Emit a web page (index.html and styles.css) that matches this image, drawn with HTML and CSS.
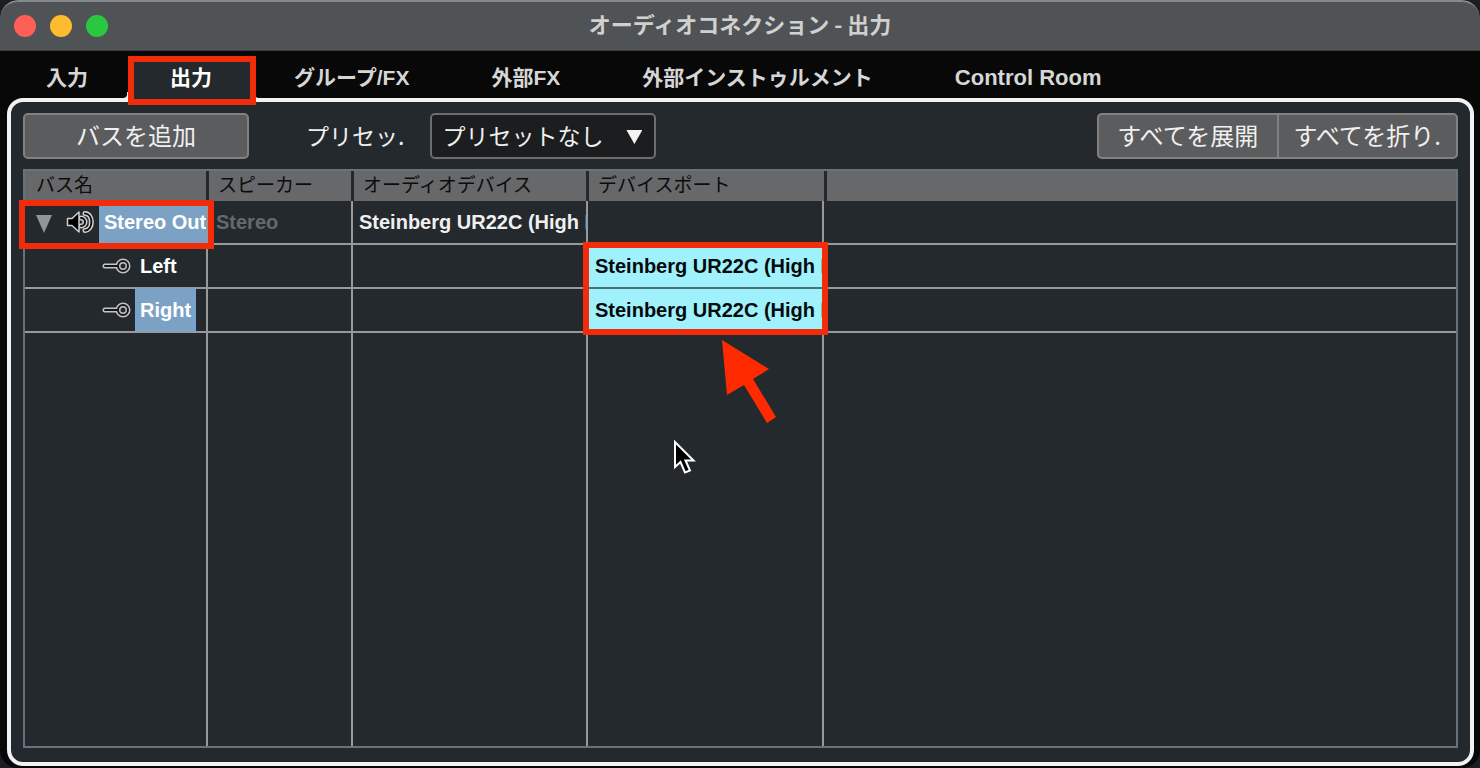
FILE: index.html
```html
<!DOCTYPE html>
<html lang="ja">
<head>
    <meta charset="UTF-8">
    <meta name="viewport" content="width=device-width, initial-scale=1.0">
    <title>オーディオコネクション - 出力</title>
    <link rel="stylesheet" href="styles.css">
</head>
<body>
    <div class="window">
        <header class="titlebar">
            <div class="lights">
                <span class="light red"></span>
                <span class="light yellow"></span>
                <span class="light green"></span>
            </div>
            <h1>オーディオコネクション - 出力</h1>
        </header>

        <nav class="tabs">
            <button type="button" class="tab">入力</button>
            <button type="button" class="tab active">出力<span class="mark mark-tab"></span></button>
            <button type="button" class="tab">グループ/FX</button>
            <button type="button" class="tab">外部FX</button>
            <button type="button" class="tab">外部インストゥルメント</button>
            <button type="button" class="tab latin">Control Room</button>
        </nav>

        <main class="panel">
            <div class="toolbar">
                <button type="button" class="btn add-bus">バスを追加</button>
                <label for="preset">プリセッ.</label>
                <div class="select-box">
                    <select id="preset">
                        <option>プリセットなし</option>
                    </select>
                    <span class="select-arrow"></span>
                </div>
                <div class="btn-group">
                    <button type="button" class="btn">すべてを展開</button>
                    <button type="button" class="btn">すべてを折り.</button>
                </div>
            </div>

            <div class="table-box">
                <table>
                    <colgroup>
                        <col class="col-name">
                        <col class="col-speaker">
                        <col class="col-device">
                        <col class="col-port">
                        <col>
                    </colgroup>
                    <thead>
                        <tr>
                            <th>バス名</th>
                            <th>スピーカー</th>
                            <th>オーディオデバイス</th>
                            <th>デバイスポート</th>
                            <th></th>
                        </tr>
                    </thead>
                    <tbody>
                        <tr>
                            <td>
                                <div class="bus">
                                    <span class="toggle"></span>
                                    <svg class="speaker" width="30" height="24" viewBox="0 0 30 24">
                                        <path d="M15 8A4 4 0 0 1 15 16M19 3.500C27.500 4 27.500 20 19 20.500" fill="none" stroke="#d0d0d0" stroke-width="5" stroke-linecap="round"/>
                                        <path d="M15 8A4 4 0 0 1 15 16M19 3.500C27.500 4 27.500 20 19 20.500" fill="none" stroke="#111" stroke-width="2" stroke-linecap="round"/>
                                        <path d="M1.500 8.500H6L13 2V22L6 15.500H1.500Z" fill="#000" stroke="#d0d0d0" stroke-width="1.500" stroke-linejoin="round"/>
                                    </svg>
                                    <span class="name selected">Stereo Out</span>
                                </div>
                                <span class="mark mark-bus"></span>
                            </td>
                            <td class="dim">Stereo</td>
                            <td><div class="clip">Steinberg UR22C (High P</div></td>
                            <td></td>
                            <td></td>
                        </tr>
                        <tr>
                            <td>
                                <div class="bus channel">
                                    <svg width="30" height="18" viewBox="0 0 30 18">
                                        <path d="M3 9H16" stroke="#c4c4c4" stroke-width="5" stroke-linecap="round"/>
                                        <circle cx="21" cy="9" r="5" fill="#24292d" stroke="#c4c4c4" stroke-width="5"/>
                                        <path d="M3 9H16" stroke="#15181a" stroke-width="2" stroke-linecap="round"/>
                                        <circle cx="21" cy="9" r="5" fill="none" stroke="#15181a" stroke-width="2"/>
                                    </svg>
                                    <span class="name">Left</span>
                                </div>
                            </td>
                            <td></td>
                            <td></td>
                            <td class="port"><div class="clip">Steinberg UR22C (High P</div><span class="mark mark-port"></span></td>
                            <td></td>
                        </tr>
                        <tr>
                            <td>
                                <div class="bus channel">
                                    <svg width="30" height="18" viewBox="0 0 30 18">
                                        <path d="M3 9H16" stroke="#c4c4c4" stroke-width="5" stroke-linecap="round"/>
                                        <circle cx="21" cy="9" r="5" fill="#24292d" stroke="#c4c4c4" stroke-width="5"/>
                                        <path d="M3 9H16" stroke="#15181a" stroke-width="2" stroke-linecap="round"/>
                                        <circle cx="21" cy="9" r="5" fill="none" stroke="#15181a" stroke-width="2"/>
                                    </svg>
                                    <span class="name selected outlined">Right</span>
                                </div>
                            </td>
                            <td></td>
                            <td></td>
                            <td class="port"><div class="clip">Steinberg UR22C (High P</div></td>
                            <td></td>
                        </tr>
                        <tr class="filler">
                            <td></td>
                            <td></td>
                            <td></td>
                            <td></td>
                            <td></td>
                        </tr>
                    </tbody>
                </table>

                <svg class="arrow" width="56" height="84" viewBox="0 0 56 84">
                    <path d="M1 0L48 29L32 39L55 77L46 83L23 45L6 55Z" fill="#ff2a00"/>
                </svg>
                <svg class="cursor" width="24" height="36" viewBox="0 0 24 36">
                    <path d="M2 2V27L7.500 22L12 32.500L17 30.500L12.500 20.500H20.500Z" fill="#000" stroke="#fff" stroke-width="2"/>
                </svg>
            </div>
        </main>
    </div>
</body>
</html>
```
FILE: styles.css
```css
* {
    box-sizing: border-box;
}

body {
    margin: 0;
    background-color: #1c1d20;
    color: #f0f0f0;
    font-family: "Liberation Sans", "Noto Sans CJK JP", sans-serif;
}

button,
select {
    margin: 0;
    color: inherit;
    font-family: "Noto Sans CJK JP", sans-serif;
}

.window {
    display: flex;
    flex-direction: column;
    min-height: 100vh;
    background-color: #080808;
    border-radius: 18px;
    overflow: hidden;
}

/* title bar */
.titlebar {
    display: grid;
    grid-template-columns: 1fr auto 1fr;
    align-items: center;
    height: 51px;
    padding: 0 14px;
    background-color: #505355;
    border-top: 2px solid #85888a;
    border-bottom: 1px solid #3c3e40;
    border-radius: 18px 18px 0 0;
}

.titlebar h1 {
    margin: 0;
    padding-bottom: 6px;
    color: #d0d0d1;
    font-family: "Noto Sans CJK JP", sans-serif;
    font-size: 22px;
    line-height: 32px;
}

.lights {
    display: flex;
    gap: 14px;
}

.light {
    width: 22px;
    height: 22px;
    border-radius: 50%;
}

.red {
    background-color: #ff5f57;
}

.yellow {
    background-color: #febb2e;
}

.green {
    background-color: #2ac840;
}

/* tabs */
.tabs {
    display: flex;
    height: 47px;
    padding: 6px 5px 0;
}

.tab {
    position: relative;
    padding: 0 41px;
    background: none;
    border: none;
    color: #d6d6d6;
    font-family: "Liberation Sans", "Noto Sans CJK JP", sans-serif;
    font-size: 21px;
    font-weight: bold;
    line-height: 41px;
    white-space: nowrap;
}

.tab.latin {
    font-size: 22px;
}

.tab.active {
    background-color: #24292d;
    box-shadow: 0 4px 0 #24292d;
    color: #fff;
    z-index: 1;
}

.tab.active::before,
.tab.active::after {
    content: "";
    position: absolute;
    bottom: -4px;
    left: -8px;
    width: 6px;
    height: 6px;
    border-right: 4px solid #f2f2f4;
    border-bottom: 4px solid #f2f2f4;
    border-bottom-right-radius: 8px;
}

.tab.active::after {
    left: auto;
    right: -8px;
    transform: scaleX(-1);
}

/* red frames */
.mark {
    position: absolute;
    border: 6px solid #f22c0b;
    z-index: 2;
}

.mark-tab {
    top: -1px;
    right: -3px;
    bottom: -7px;
    left: -1px;
}

.mark-bus {
    top: -1px;
    right: -8px;
    bottom: -6px;
    left: -6px;
}

.mark-port {
    top: -3px;
    right: -6px;
    left: -5px;
    height: 93px;
}

/* main panel */
.panel {
    flex: 1;
    display: flex;
    flex-direction: column;
    gap: 10px;
    margin: 0 6px 2px 7px;
    padding: 11px 12px 14px;
    background-color: #24292d;
    border: 4px solid #f2f2f4;
    border-radius: 16px;
}

.toolbar {
    display: flex;
    align-items: center;
    height: 46px;
    font-size: 23px;
}

.toolbar label {
    margin: 0 26px 0 57px;
    padding-bottom: 3px;
    font-family: "Noto Sans CJK JP", sans-serif;
}

.btn {
    height: 46px;
    padding: 0 0 3px;
    background-color: #5b5c5e;
    border: 2px solid #808183;
    border-radius: 5px;
    font-size: 24px;
    line-height: 38px;
}

.add-bus {
    width: 226px;
}

.select-box {
    position: relative;
    width: 226px;
}

.select-box select {
    display: block;
    width: 100%;
    height: 46px;
    padding: 0 10px 3px;
    appearance: none;
    background-color: #1c1d1e;
    border: 2px solid #6c6d6f;
    border-radius: 5px;
    font-size: 23px;
}

.select-arrow {
    position: absolute;
    top: 17px;
    right: 14px;
    width: 16px;
    height: 14px;
    background-color: #f4f4f4;
    clip-path: polygon(0 0, 100% 0, 50% 100%);
    pointer-events: none;
}

.btn-group {
    display: flex;
    width: 361px;
    margin-left: auto;
}

.btn-group .btn {
    flex: 1;
}

.btn-group .btn:first-child {
    border-right: none;
    border-radius: 5px 0 0 5px;
}

.btn-group .btn:last-child {
    border-radius: 0 5px 5px 0;
}

/* bus list */
.table-box {
    position: relative;
    flex: 1;
    display: grid;
    border: 2px solid #66737f;
}

table {
    width: 100%;
    height: 100%;
    table-layout: fixed;
    border-spacing: 0;
}

.col-name {
    width: 181px;
}

.col-speaker {
    width: 145px;
}

.col-device {
    width: 235px;
}

.col-port {
    width: 236px;
}

th {
    height: 30px;
    padding: 0 9px 4px;
    background-color: #67686a;
    border-left: 3px solid #24292d;
    color: #0c0c0c;
    font-family: "Noto Sans CJK JP", sans-serif;
    font-size: 19px;
    font-weight: normal;
    line-height: 26px;
    text-align: left;
    white-space: nowrap;
}

td {
    position: relative;
    height: 44px;
    padding: 0;
    border-left: 2px solid #98999b;
    border-bottom: 2px solid #98999b;
    font-size: 20px;
    font-weight: bold;
    line-height: 42px;
    white-space: nowrap;
}

th:first-child,
td:first-child {
    border-left: none;
}

th:first-child {
    padding-left: 11px;
}

th:last-child {
    border-left: 2px solid #67686a;
    box-shadow: inset 3px 0 0 #24292d;
}

.filler td {
    height: auto;
    border-bottom: none;
}

.dim {
    padding-left: 8px;
    color: #66686a;
}

.clip {
    padding-left: 6px;
    overflow: hidden;
}

.port {
    background-color: #9ff1fb;
    border-bottom-color: #4b7078;
    color: #06090b;
}

.port .clip {
    padding-left: 7px;
}

.bus {
    display: flex;
    align-items: center;
    height: 42px;
    overflow: hidden;
}

.bus > * {
    flex-shrink: 0;
}

.toggle {
    width: 16px;
    height: 18px;
    margin: 4px 14px 0 11px;
    background-color: #929496;
    clip-path: polygon(0 0, 100% 0, 50% 100%);
}

.channel {
    padding-left: 77px;
}

.name {
    margin-left: 3px;
    padding: 0 5px;
    color: #fff;
}

.selected {
    background-color: #7ba2c5;
}

.outlined {
    padding: 0 4px;
    border: 1px solid #68a8e4;
    line-height: 40px;
}

/* pointers drawn over the list */
.arrow {
    position: absolute;
    top: 169px;
    left: 696px;
}

.cursor {
    position: absolute;
    top: 269px;
    left: 648px;
}
```
